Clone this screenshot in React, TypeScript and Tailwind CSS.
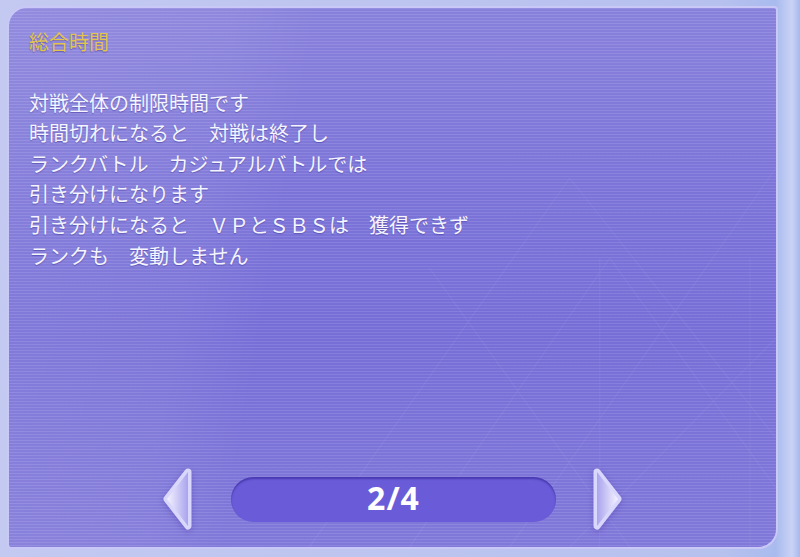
import React from "react";

const lines = [
  "対戦全体の制限時間です",
  "時間切れになると　対戦は終了し",
  "ランクバトル　カジュアルバトルでは",
  "引き分けになります",
  "引き分けになると　ＶＰとＳＢＳは　獲得できず",
  "ランクも　変動しません",
];

function Arrow({ dir }: { dir: "left" | "right" }) {
  const id = dir === "left" ? "gl" : "gr";
  const d = dir === "left" ? "M26 5 L5 32 L26 59 Z" : "M6 5 L27 32 L6 59 Z";
  return (
    <svg width="32" height="64" viewBox="0 0 32 64" className="drop-shadow-[0_2px_3px_rgba(60,40,160,0.35)]">
      <defs>
        <linearGradient id={id} x1={dir === "left" ? "0" : "1"} y1="0.5" x2={dir === "left" ? "1" : "0"} y2="0.5">
          <stop offset="0" stopColor="#f4f3ff" />
          <stop offset="1" stopColor="#aaa4ee" />
        </linearGradient>
      </defs>
      <path d={d} fill={`url(#${id})`} stroke="#d9d7fb" strokeWidth="7" strokeLinejoin="round" />
      <path d={d} fill={`url(#${id})`} stroke="none" />
    </svg>
  );
}

export default function App() {
  return (
    <div className="w-[800px] h-[557px] overflow-hidden bg-[image:linear-gradient(90deg,#c3c9f1_0%,#b7c1ee_90%,#a9bbee_97%,#c9d3f6_99%,#a7b8ec_100%)] pt-[6px] pl-[7px] pr-[22px] pb-[8px] font-['Noto_Sans_CJK_JP',sans-serif]">
      <div className="relative w-full h-full rounded-tl-[20px] rounded-tr-[4px] rounded-br-[20px] rounded-bl-[4px] border-2 border-[#c9c8f6] overflow-hidden bg-[#7b73da] bg-[image:repeating-linear-gradient(180deg,rgba(255,255,255,0.07)_0px,rgba(255,255,255,0.07)_1px,rgba(40,30,140,0.05)_1px,rgba(40,30,140,0.05)_3px),linear-gradient(100deg,rgba(255,255,255,0.09)_0%,rgba(255,255,255,0.06)_26%,rgba(255,255,255,0)_36%),linear-gradient(180deg,rgba(255,255,255,0.14)_0%,rgba(255,255,255,0.04)_35%,rgba(255,255,255,0.0)_60%,rgba(255,255,255,0.08)_100%)] flex flex-col">
        <svg className="absolute inset-0 w-full h-full opacity-[0.05] pointer-events-none" viewBox="0 0 766 539" preserveAspectRatio="none">
          <g stroke="#ffffff" strokeWidth="1" fill="none">
            <path d="M400 539 L600 250 L766 480" />
            <path d="M300 539 L560 170 L766 430" />
            <path d="M500 539 L766 160" />
            <path d="M620 539 L420 260" />
            <path d="M766 330 L560 539" />
            <line x1="590" y1="250" x2="590" y2="539" />
            <line x1="740" y1="250" x2="740" y2="539" />
          </g>
        </svg>
        <div className="relative pl-[20px] pt-[19px] text-[20px] leading-[30.6px] [text-shadow:0_1px_1px_rgba(50,40,140,0.45)]">
          <div className="text-[#e2c44e]">総合時間</div>
          <div className="mt-[30px] text-[#f5f5ff]">
            {lines.map((l, i) => (
              <div key={i} className="whitespace-pre">{l}</div>
            ))}
          </div>
        </div>
        <div className="relative mt-auto mb-[16px] flex items-center justify-center">
          <Arrow dir="left" />
          <div className="ml-[37px] mr-[35px] w-[325px] h-[45px] rounded-full bg-[#6a5cd8] shadow-[inset_0_2px_2px_rgba(50,35,150,0.6)] flex items-center justify-center">
            <span className="text-white font-bold text-[32px] leading-none tracking-[1px] font-['Open_Sans',sans-serif] mt-[-2px]">2/4</span>
          </div>
          <Arrow dir="right" />
        </div>
      </div>
    </div>
  );
}
